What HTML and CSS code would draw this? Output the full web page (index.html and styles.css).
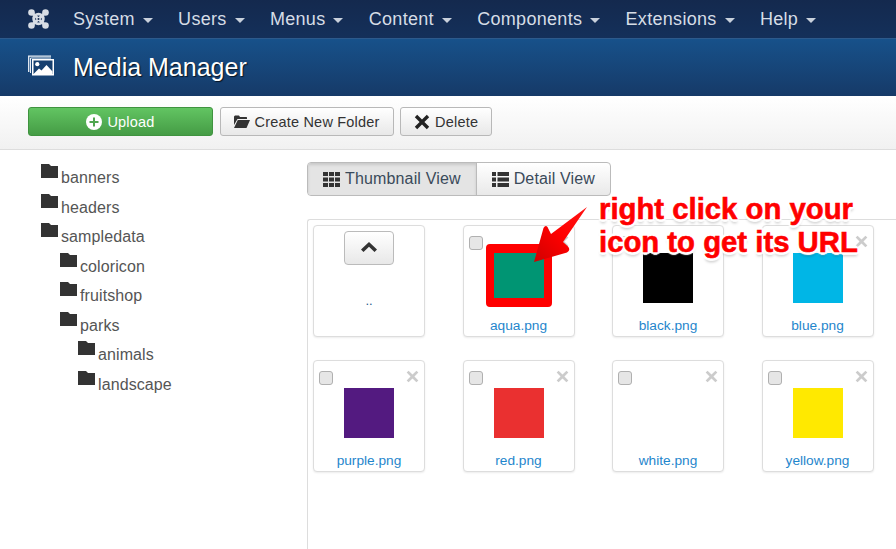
FILE: index.html
```html
<!DOCTYPE html>
<html lang="en">
<head>
<meta charset="utf-8">
<title>Media Manager</title>
<link rel="stylesheet" href="styles.css">
</head>
<body>
<svg class="defs" width="0" height="0" aria-hidden="true">
  <symbol id="folder" viewBox="0 0 17 14"><path d="M0 0h8l2 2h7v12H0z"/></symbol>
  <symbol id="times" viewBox="0 0 16 16"><path d="M3.2 0.8 8 5.6 12.8 0.8 15.2 3.2 10.4 8 15.2 12.8 12.8 15.2 8 10.400 3.200 15.200 0.800 12.800 5.600 8 0.800 3.200z"/></symbol>
</svg>
<nav class="topnav">
  <svg class="joomla" viewBox="0 0 21 20" aria-hidden="true">
    <g fill="none" stroke="#d8dde4">
      <path d="M3.500 3.500 17.500 16.500M17.500 3.500 3.500 16.500" stroke-width="3"/>
      <circle cx="10.500" cy="10" r="4.800" stroke-width="2.800"/>
    </g>
    <g fill="#d8dde4">
      <circle cx="3.500" cy="3.500" r="3.300"/><circle cx="17.500" cy="3.500" r="3.300"/>
      <circle cx="3.500" cy="16.500" r="3.300"/><circle cx="17.500" cy="16.500" r="3.300"/>
    </g>
    <circle cx="10.500" cy="10" r="1" fill="#14294e"/>
  </svg>
  <ul class="menu">
    <li class="menu-item">System<span class="caret"></span></li>
    <li class="menu-item">Users<span class="caret"></span></li>
    <li class="menu-item">Menus<span class="caret"></span></li>
    <li class="menu-item">Content<span class="caret"></span></li>
    <li class="menu-item">Components<span class="caret"></span></li>
    <li class="menu-item">Extensions<span class="caret"></span></li>
    <li class="menu-item">Help<span class="caret"></span></li>
  </ul>
</nav>
<header class="titlebar">
  <svg class="title-icon" viewBox="0 0 26 21" aria-hidden="true">
    <path d="M.700 17V1.200H23" fill="none" stroke="#e8eef5" stroke-width="1.300"/>
    <path d="M2.500 18V3H23" fill="none" stroke="#e8eef5" stroke-width="1"/>
    <rect x="4" y="4" width="22" height="16.500" fill="#fff"/>
    <rect x="5.500" y="5.500" width="19" height="13.500" fill="#17406f"/>
    <path d="M5.500 19 11 13.500 13.500 15.500 18.500 10 24.500 16.500V19z" fill="#fff"/>
    <circle cx="9.300" cy="9.200" r="2.100" fill="#fff"/>
  </svg>
  <h1 class="title">Media Manager</h1>
</header>
<div class="toolbar">
  <button class="btn btn-success" type="button">
    <svg class="ico-plus" viewBox="0 0 16 16" aria-hidden="true"><circle cx="8" cy="8" r="8" fill="#fff"/><path d="M7 3.500h2V7h3.500v2H9v3.500H7V9H3.500V7H7z" fill="#4fa64f"/></svg>Upload
  </button>
  <button class="btn" type="button">
    <svg class="ico-open" viewBox="0 0 16 13" aria-hidden="true"><path d="M0 1.500 1 .5h4l1 1.500h6.500l.5.500V4H3.500L0 10zM3.800 5H16l-3.500 8H0z" fill="#333"/></svg>Create New Folder
  </button>
  <button class="btn" type="button">
    <svg class="ico-times" aria-hidden="true"><use href="#times"/></svg>Delete
  </button>
</div>
<main class="content">
  <aside class="tree">
    <ul class="tree-list">
      <li class="tree-row"><svg class="ico-folder"><use href="#folder"/></svg>banners</li>
      <li class="tree-row"><svg class="ico-folder"><use href="#folder"/></svg>headers</li>
      <li class="tree-row"><svg class="ico-folder"><use href="#folder"/></svg>sampledata</li>
      <li class="tree-row indent-1"><svg class="ico-folder"><use href="#folder"/></svg>coloricon</li>
      <li class="tree-row indent-1"><svg class="ico-folder"><use href="#folder"/></svg>fruitshop</li>
      <li class="tree-row indent-1"><svg class="ico-folder"><use href="#folder"/></svg>parks</li>
      <li class="tree-row indent-2"><svg class="ico-folder"><use href="#folder"/></svg>animals</li>
      <li class="tree-row indent-2"><svg class="ico-folder"><use href="#folder"/></svg>landscape</li>
    </ul>
  </aside>
  <section class="browser">
    <div class="viewswitch">
      <div class="view view-active">
        <svg class="ico-view" viewBox="0 0 17 15" aria-hidden="true"><path d="M0 0h5v4H0zM6 0h5v4H6zM12 0h5v4h-5zM0 5.500h5v4H0zM6 5.500h5v4H6zM12 5.500h5v4h-5zM0 11h5v4H0zM6 11h5v4H6zM12 11h5v4h-5z" fill="#333"/></svg>Thumbnail View
      </div>
      <div class="view">
        <svg class="ico-view" viewBox="0 0 17 15" aria-hidden="true"><path d="M0 0h4v4H0zM5.500 0H17v4H5.500zM0 5.500h4v4H0zM5.500 5.500H17v4H5.500zM0 11h4v4H0zM5.500 11H17v4H5.500z" fill="#333"/></svg>Detail View
      </div>
    </div>
    <div class="panel">
      <div class="grid">
        <article class="card">
          <div class="up-btn"><svg viewBox="0 0 16 10" class="ico-up" aria-hidden="true"><path d="M8 0 16 7.500 13.500 10 8 4.800 2.500 10 0 7.500z" fill="#333"/></svg></div>
          <p class="up-label">..</p>
        </article>
        <article class="card"><span class="check"></span><svg class="ico-close"><use href="#times"/></svg><div class="thumb c-aqua"></div><p class="name">aqua.png</p></article>
        <article class="card"><span class="check"></span><svg class="ico-close"><use href="#times"/></svg><div class="thumb c-black"></div><p class="name">black.png</p></article>
        <article class="card"><span class="check"></span><svg class="ico-close"><use href="#times"/></svg><div class="thumb c-blue"></div><p class="name">blue.png</p></article>
        <article class="card"><span class="check"></span><svg class="ico-close"><use href="#times"/></svg><div class="thumb c-purple"></div><p class="name">purple.png</p></article>
        <article class="card"><span class="check"></span><svg class="ico-close"><use href="#times"/></svg><div class="thumb c-red"></div><p class="name">red.png</p></article>
        <article class="card"><span class="check"></span><svg class="ico-close"><use href="#times"/></svg><div class="thumb c-white"></div><p class="name">white.png</p></article>
        <article class="card"><span class="check"></span><svg class="ico-close"><use href="#times"/></svg><div class="thumb c-yellow"></div><p class="name">yellow.png</p></article>
      </div>
    </div>
  </section>
</main>
<div class="frame"></div>
<svg class="arrow" viewBox="0 0 70 70" aria-hidden="true">
  <defs><linearGradient id="arrowfill" x1="0" y1="1" x2="1" y2="0"><stop offset="0" stop-color="#d00000"/><stop offset=".5" stop-color="#f00"/><stop offset="1" stop-color="#ff1515"/></linearGradient></defs>
  <path d="M62 7 26 34 22.500 27Q20.500 24.500 18.500 28L9 62 42 52.500Q46 50 43 46.500L38 42z" fill="url(#arrowfill)"/>
</svg>
<p class="callout">right click on your<br>icon to get its URL</p>
</body>
</html>
```

FILE: styles.css
```css
* { box-sizing: border-box; }
html, body { margin: 0; height: 100%; overflow: hidden; }
body {
  position: relative;
  display: flex;
  flex-direction: column;
  height: 549px;
  background: #fff;
  color: #333;
  font-family: "Liberation Sans", Arial, sans-serif;
  font-size: 16px;
}
.defs { position: absolute; }
ul { list-style: none; margin: 0; padding: 0; }
p, h1 { margin: 0; }

.topnav {
  height: 38px;
  flex: none;
  display: flex;
  align-items: center;
  padding-left: 28px;
  background: linear-gradient(#14294e, #14305a);
}
.joomla { width: 21px; height: 20px; margin-top: -1px; flex: none; }
.menu { display: flex; margin-left: 24px; }
.menu-item {
  color: #d6dde6;
  font-size: 18px;
  letter-spacing: .3px;
  margin-right: 25.300px;
  display: flex;
  align-items: center;
  line-height: 38px;
}
.caret {
  margin-left: 8px;
  margin-top: 2px;
  border-top: 5px solid #c9d1dc;
  border-left: 5px solid transparent;
  border-right: 5px solid transparent;
}

.titlebar {
  height: 58px;
  flex: none;
  display: flex;
  align-items: center;
  padding-left: 28px;
  border-top: 1px solid #2d5a8c;
  background: linear-gradient(#17518a, #163a68);
}
.title-icon { width: 26px; height: 21px; margin-top: -4px; flex: none; }
.title {
  margin: 0 0 0 19px;
  color: #fff;
  font-size: 25px;
  font-weight: 400;
  text-shadow: 1px 1px 1px rgba(0,0,0,.7);
}

.toolbar {
  height: 54px;
  flex: none;
  display: flex;
  gap: 6.500px;
  padding: 11px 0 0 28px;
  background: linear-gradient(#fff, #f1f1f1);
  border-bottom: 1px solid #ddd;
}
.btn {
  height: 29px;
  padding: 0 13px;
  display: flex;
  align-items: center;
  justify-content: center;
  font: 14.500px "Liberation Sans", Arial, sans-serif;
  letter-spacing: .2px;
  color: #333;
  background: linear-gradient(#fff, #e8e8e8);
  border: 1px solid #b8b8b8;
  border-radius: 3px;
}
.btn-success {
  width: 185px;
  color: #fff;
  border: 1px solid #3f933f;
  background: linear-gradient(#62c462, #459c45);
}
.ico-plus { width: 16px; height: 16px; margin-right: 5px; }
.ico-open { width: 16px; height: 13px; margin-right: 5px; }
.ico-times { width: 16px; height: 16px; margin-right: 5px; fill: #222; }

.content { flex: 1; display: flex; min-height: 0; }
.tree { width: 307px; flex: none; padding: 13px 0 0 41px; }
.tree-row {
  height: 29.500px;
  display: flex;
  align-items: center;
  color: #555;
  font-size: 16px;
  letter-spacing: .1px;
  line-height: 29px;
}
.ico-folder { width: 17px; height: 14px; margin: -13px 3px 0 0; flex: none; fill: #333; }
.indent-1 { margin-left: 19px; }
.indent-2 { margin-left: 37px; }

.browser { flex: 1; min-width: 0; display: flex; flex-direction: column; }
.viewswitch {
  display: flex;
  align-self: flex-start;
  height: 34px;
  margin-top: 12px;
  border: 1px solid #bbb;
  border-radius: 4px;
  overflow: hidden;
  font-size: 16px;
  letter-spacing: .15px;
  color: #3a4a5a;
  background: linear-gradient(#fff, #e9e9e9);
}
.view { display: flex; align-items: center; padding: 0 15px; }
.view-active {
  background: #e4e4e4;
  border-right: 1px solid #bbb;
  box-shadow: inset 0 2px 3px rgba(0,0,0,.12);
}
.ico-view { width: 17px; height: 15px; margin-right: 5px; }

.panel {
  flex: 1;
  margin-top: 23px;
  padding: 5px 0 0 5px;
  border-top: 1px solid #ddd;
  border-left: 1px solid #ddd;
  border-top-left-radius: 3px;
}
.grid {
  display: grid;
  grid-template-columns: repeat(4, 112px);
  column-gap: 37.500px;
  row-gap: 23px;
}
.card {
  position: relative;
  height: 112px;
  border: 1px solid #ddd;
  border-radius: 4px;
  box-shadow: 0 1px 2px rgba(0,0,0,.08);
  background: #fff;
}
.check {
  position: absolute;
  left: 5px;
  top: 10px;
  width: 14px;
  height: 14px;
  background: #e6e6e6;
  border: 1px solid #b0b0b0;
  border-radius: 3px;
}
.ico-close { position: absolute; right: 5px; top: 9px; width: 13px; height: 13px; fill: #ccc; }
.thumb { width: 50px; height: 50px; margin: 27px auto 0; }
.c-aqua { background: #009573; }
.c-black { background: #000; }
.c-blue { background: #00b6e6; }
.c-purple { background: #531a80; }
.c-red { background: #ea3030; }
.c-white { background: #fff; }
.c-yellow { background: #ffe900; }
.name {
  margin-top: 14.500px;
  text-align: center;
  font-size: 13.700px;
  line-height: 16px;
  color: #1f86cc;
}
.up-btn {
  width: 50px;
  height: 34px;
  margin: 5px auto 0;
  display: flex;
  align-items: center;
  justify-content: center;
  border: 1px solid #bbb;
  border-radius: 4px;
  background: linear-gradient(#fff, #e8e8e8);
}
.ico-up { width: 16px; height: 10px; margin-top: -3px; }
.up-label { margin-top: 28px; text-align: center; font-size: 13px; line-height: 16px; color: #2a5a8c; }

.frame {
  position: absolute;
  left: 486px;
  top: 244px;
  width: 66px;
  height: 63px;
  border: solid #f00;
  border-width: 9px 8px;
  border-radius: 4px;
}
.arrow { position: absolute; left: 525px; top: 200px; width: 70px; height: 70px; }
.callout {
  position: absolute;
  left: 599px;
  top: 192px;
  color: #f00;
  font-family: "Liberation Sans", Arial, sans-serif;
  font-size: 29.300px;
  font-weight: 700;
  line-height: 33px;
  white-space: nowrap;
  -webkit-text-stroke: .6px #f00;
  text-shadow:
    3px 0 1px #fff, -3px 0 1px #fff, 0 3px 1px #fff, 0 -3px 1px #fff,
    2px 2px 1px #fff, -2px 2px 1px #fff, 2px -2px 1px #fff, -2px -2px 1px #fff,
    0 4px 3px rgba(0,0,0,.25);
}
```
